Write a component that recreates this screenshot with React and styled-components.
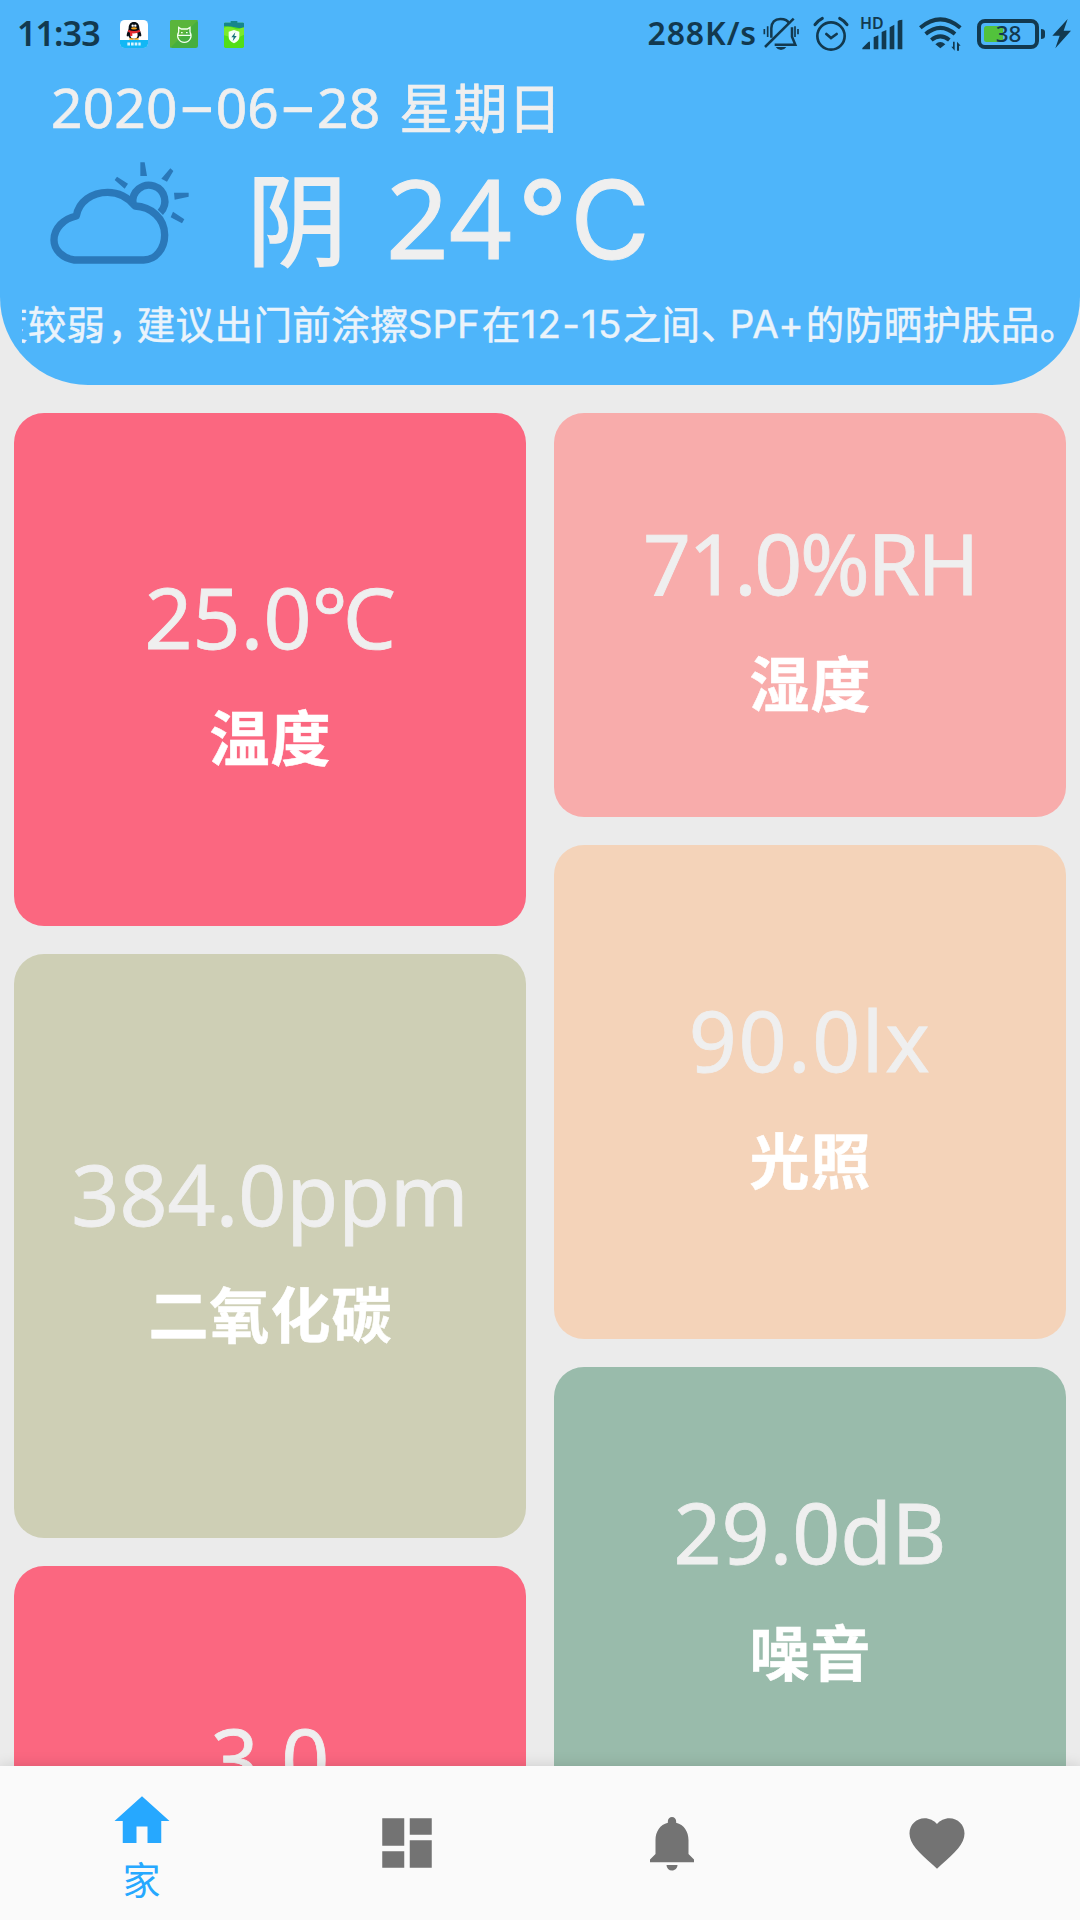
import React from "react";
import styled, { createGlobalStyle } from "styled-components";
import { MdHome, MdDashboard, MdNotifications, MdFavorite } from "react-icons/md";

const INK = "#12394f";

const GlobalStyle = createGlobalStyle`
  * { box-sizing: border-box; }
  body {
    margin: 0;
    overflow: hidden;
    background: #ebebeb;
    font-family: "Noto Sans", "Noto Sans CJK SC", sans-serif;
  }
`;

const Screen = styled.div`
  width: 1080px;
  height: 1920px;
  display: flex;
  flex-direction: column;
  overflow: hidden;
  background: #ebebeb;
`;

const Header = styled.header`
  flex: none;
  height: 385px;
  display: flex;
  flex-direction: column;
  background: #4eb5fa;
  border-radius: 0 0 88px 88px;
  color: #efefef;
  white-space: nowrap;
`;

const StatusBar = styled.div`
  height: 68px;
  display: flex;
  justify-content: space-between;
  padding: 0 8px 0 17px;
  color: ${INK};
`;

const StatusGroup = styled.div`
  display: flex;
  align-items: center;
`;

const Clock = styled.span`
  width: 103px;
  padding-bottom: 2px;
  font-size: 34px;
  line-height: 64px;
  font-weight: 600;
  letter-spacing: -0.9px;
`;

const Speed = styled.span`
  padding-bottom: 2px;
  font-size: 32px;
  line-height: 64px;
  font-weight: 600;
  letter-spacing: 0.9px;
  margin-right: 6px;
`;

const StatusIcon = styled.svg`
  display: block;
  flex: none;
  overflow: visible;
  margin-right: ${(p) => p.$gap || 0}px;
`;

const DateLine = styled.div`
  height: 80px;
  padding-left: 51px;
  font-size: 55px;
  line-height: 78px;
  letter-spacing: 0.2px;
  display: flex;
  -webkit-text-stroke: 0.7px currentColor;
`;

const Dash = styled.span`
  display: inline-block;
  width: 38px;
  text-align: center;
  font-family: Inter, sans-serif;
  transform: scaleX(1.55);
`;

const Weekday = styled.span`
  margin-left: 19px;
  font-size: 54px;
  line-height: 80px;
`;

const WeatherRow = styled.div`
  height: 140px;
  display: flex;
  align-items: center;
  padding: 0 0 10px 50px;
`;

const Condition = styled.span`
  margin-left: 58px;
  padding-top: 11px;
  font-size: 100px;
  line-height: 130px;
  -webkit-text-stroke: 1.8px currentColor;
`;

const Temperature = styled.span`
  margin-left: 39px;
  padding-top: 8px;
  font-size: 110px;
  line-height: 130px;
  -webkit-text-stroke: 1px currentColor;
`;

const Unit = styled.span`
  margin-left: 6px;
  font-family: Inter, sans-serif;
  font-size: 109px;
  letter-spacing: 4px;
  -webkit-text-stroke: 1px currentColor;
`;

const Marquee = styled.div`
  height: 60px;
  margin: 6px 0 0 22px;
  display: flex;
  overflow: hidden;
  color: #eaf3fa;
  font-size: 38.5px;
  line-height: 61px;
  -webkit-text-stroke: 0.5px currentColor;
`;

const Segment = styled.span`
  flex: none;
  width: ${(p) => p.$w}px;
  letter-spacing: ${(p) => p.$ls || 0}px;
  margin-left: ${(p) => p.$ml || 0}px;
`;

const LatinSegment = styled(Segment)`
  font-family: Inter, sans-serif;
  line-height: 61px;
  -webkit-text-stroke: 0.4px currentColor;
`;

const Board = styled.main`
  flex: 1;
  min-height: 0;
  display: grid;
  grid-template-columns: 512px 512px;
  column-gap: 28px;
  padding: 28px 14px 0;
  overflow: hidden;
`;

const Column = styled.div`
  display: flex;
  flex-direction: column;
  gap: 28px;
`;

const Card = styled.section`
  flex: none;
  height: ${(p) => p.$h}px;
  display: flex;
  flex-direction: column;
  align-items: center;
  justify-content: center;
  gap: 32px;
  padding-top: 1px;
  border-radius: 30px;
  background: ${(p) => p.$bg};
`;

const Value = styled.div`
  font-size: 84px;
  line-height: 104px;
  color: #efefef;
  letter-spacing: ${(p) => p.$ls}px;
  white-space: nowrap;
  -webkit-text-stroke: 0.8px currentColor;
`;

const Label = styled.div`
  font-size: 60px;
  line-height: 74px;
  font-weight: 700;
  color: #fff;
  letter-spacing: 1px;
  margin-left: 1px;
  -webkit-text-stroke: 0.5px currentColor;
`;

const Nav = styled.nav`
  position: relative;
  flex: none;
  height: 154px;
  display: grid;
  grid-template-columns: repeat(4, 1fr);
  padding: 0 11px 0 9px;
  background: #fafafa;
  box-shadow: 0 0 14px rgba(0, 0, 0, 0.14);
`;

const NavItem = styled.a`
  display: flex;
  flex-direction: column;
  align-items: center;
  justify-content: center;
  gap: 1px;
  padding-top: ${(p) => (p.$active ? 5 : 0)}px;
  color: ${(p) => (p.$active ? "#26a8ff" : "#737373")};
  font-size: 38px;
  line-height: 48px;
`;

function QQIcon() {
  return (
    <StatusIcon width="28" height="28" viewBox="0 0 84 84" $gap={22}>
      <rect width="84" height="84" rx="14" fill="#fff" />
      <path d="M0 60h84v10q0 14-14 14H14Q0 84 0 70z" fill="#12b7f5" />
      <path d="M22 72h40" stroke="#d9f4ff" strokeWidth="9" strokeDasharray="8 3" />
      <path d="M42 6c11 0 16 8 16 18 0 7 6 14 6 22 0 4-2 4-5 1-2 7-8 11-17 11s-15-4-17-11c-3 3-5 3-5-1 0-8 6-15 6-22C26 14 31 6 42 6z" fill="#080d14" />
      <ellipse cx="42" cy="45" rx="11" ry="11" fill="#fff" />
      <circle cx="38" cy="17" r="3.5" fill="#fff" />
      <circle cx="46" cy="17" r="3.5" fill="#fff" />
      <ellipse cx="42" cy="25" rx="9" ry="3.5" fill="#f9a61a" />
      <path d="M25 29q17 8 34 0l2 6q-12 6-24 5v8h-7v-10l-6-3z" fill="#e32a2f" />
      <path d="M28 57h12M44 57h12" stroke="#f9a61a" strokeWidth="5" />
    </StatusIcon>
  );
}

function MonsterIcon() {
  return (
    <StatusIcon width="28" height="28" viewBox="0 0 84 84" $gap={26}>
      <rect width="84" height="84" rx="7" fill="#46ae3f" />
      <path d="M0 84V7q0-7 7-7h77z" fill="#5ab53b" />
      <path d="M26 36V22l8 5h18l8-5v14c8 15-1 31-17 31S18 51 26 36zM22 46h43" fill="none" stroke="#f2fff0" strokeWidth="4" />
      <path d="M33 38h5M48 38h5" stroke="#f2fff0" strokeWidth="4" />
    </StatusIcon>
  );
}

function SaverIcon() {
  return (
    <StatusIcon width="20" height="27" viewBox="0 0 60 81">
      <path d="M3 5h54q3 0 3 3v68q0 5-5 5H5q-5 0-5-5V8q0-3 3-3z" fill="#52de17" />
      <path d="M0 20q15-6 30 2t30-6v25q-20 14-60 2z" fill="#7bea2a" />
      <path d="M20 0h20v5h17q3 0 3 3v11q-12 5-28 0T0 16V8q0-3 3-3h17z" fill="#17858c" />
      <path d="M30 27l16 5v16q0 12-16 19-16-7-16-19V32z" fill="#f5fff5" />
      <path d="M34 34L22 49h7l-3 12 12-16h-7z" fill="#15727a" />
    </StatusIcon>
  );
}

function MuteIcon() {
  return (
    <StatusIcon width="36" height="34" viewBox="0 0 108 102" $gap={14}>
      <g fill="none" stroke={INK} strokeWidth="7.5">
        <path d="M25 62V34C26 14 38 6 52 6s23 5 27 14M87 31v28l10 24H35" />
        <path d="M6 90L92 5" />
        <path d="M4 36v16M14 28v32M96 28v32M105 36v16" strokeWidth="5" />
      </g>
      <path d="M38 90h32q-6 9-16 9t-16-9z" fill={INK} />
    </StatusIcon>
  );
}

function AlarmIcon() {
  return (
    <StatusIcon width="36" height="36" viewBox="0 0 108 108" $gap={12}>
      <g fill="none" stroke={INK} strokeWidth="8" strokeLinecap="round">
        <circle cx="54" cy="60" r="41" />
        <path d="M6 26Q14 14 28 7M102 26Q94 14 80 7" strokeWidth="9" />
        <path d="M40 54l14 12 17-12" />
      </g>
    </StatusIcon>
  );
}

function SignalIcon() {
  return (
    <StatusIcon width="42" height="33" viewBox="0 0 126 99" $gap={16}>
      <text x="-3" y="34" fill={INK} fontSize="46" fontWeight="600" fontFamily="Noto Sans, sans-serif" textLength="71" lengthAdjust="spacingAndGlyphs">HD</text>
      <path d="M4 94V90L22 72q5-4 5 2v20zM38 58l14-6v42H38zM62 42l14-6v58H62zM86 28l14-8v74H86zM110 10q2-5 14-5v89h-14z" fill={INK} />
    </StatusIcon>
  );
}

function WifiIcon() {
  return (
    <StatusIcon width="43" height="34" viewBox="0 0 129 102" $gap={15}>
      <g fill="none" stroke={INK} strokeWidth="12">
        <path d="M4 32Q64-18 124 32M20 51Q64 14 108 51M37 69Q64 47 91 69" />
      </g>
      <path d="M64 94L49 82q15-14 30 0zM107 74v27l-10-12h5V74zM114 101V74l11 12h-5v15z" fill={INK} />
    </StatusIcon>
  );
}

function BatteryIcon() {
  return (
    <StatusIcon width="68" height="32" viewBox="0 0 68 32" $gap={7}>
      <rect x="2" y="3" width="58" height="26" rx="6" fill="none" stroke={INK} strokeWidth="4" />
      <rect x="7" y="8" width="19" height="16" rx="2.5" fill="#52c23c" />
      <path d="M64 11v10q4 0 4-3v-4q0-3-4-3z" fill={INK} />
      <text x="31.5" y="24" fill={INK} fontSize="22.5" fontWeight="500" textAnchor="middle" fontFamily="Noto Sans, sans-serif">38</text>
    </StatusIcon>
  );
}

function BoltIcon() {
  return (
    <StatusIcon width="20" height="30" viewBox="0 0 60 90">
      <path d="M47 0L1 50h22L10 88l47-53H35z" fill={INK} />
    </StatusIcon>
  );
}

function CloudIcon() {
  return (
    <StatusIcon width="139" height="102" viewBox="149 66 417 306">
      <g fill="none" stroke="#2a78b9" strokeWidth="22" strokeLinejoin="round">
        <path d="M222 360C187 355 161 330 161 300c0-35 29-64 67-72 7-43 47-71 94-71 33 0 60 14 82 41 48 2 89 37 89 87 0 42-28 75-63 75z" />
        <path d="M398 190A48 48 0 1 1 480 217" />
      </g>
      <path d="M420 67h13l7 41h-20zM510 85l9 8-19 32-17-9zM565 158v12l-42 9-2-21zM518 215l34 23-7 12-34-18zM350 110l33 21-10 15-30-26z" fill="#2a78b9" />
    </StatusIcon>
  );
}

const LEFT = [
  { value: "25.0℃", label: "温度", h: 513, bg: "#fb6780", ls: 0.2 },
  { value: "384.0ppm", label: "二氧化碳", h: 584, bg: "#cecfb5", ls: 0.1 },
  { value: "3.0", label: "", h: 489, bg: "#fb6780", ls: 0 },
];

const RIGHT = [
  { value: "71.0%RH", label: "湿度", h: 404, bg: "#f8acab", ls: -2.4 },
  { value: "90.0lx", label: "光照", h: 494, bg: "#f4d3b9", ls: 1.6 },
  { value: "29.0dB", label: "噪音", h: 434, bg: "#99bbab", ls: 0 },
];

function Cards({ items }) {
  return (
    <Column>
      {items.map((c) => (
        <Card key={c.value} $h={c.h} $bg={c.bg}>
          <Value $ls={c.ls}>{c.value}</Value>
          <Label>{c.label || "\u00a0"}</Label>
        </Card>
      ))}
    </Column>
  );
}

export default function App() {
  return (
    <Screen>
      <GlobalStyle />
      <Header>
        <StatusBar>
          <StatusGroup>
            <Clock>11:33</Clock>
            <QQIcon />
            <MonsterIcon />
            <SaverIcon />
          </StatusGroup>
          <StatusGroup>
            <Speed>288K/s</Speed>
            <MuteIcon />
            <AlarmIcon />
            <SignalIcon />
            <WifiIcon />
            <BatteryIcon />
            <BoltIcon />
          </StatusGroup>
        </StatusBar>
        <DateLine>
          2020<Dash>-</Dash>06<Dash>-</Dash>28<Weekday>星期日</Weekday>
        </DateLine>
        <WeatherRow>
          <CloudIcon />
          <Condition>阴</Condition>
          <Temperature>
            24<Unit>°C</Unit>
          </Temperature>
        </WeatherRow>
        <Marquee>
          <Segment $w={38.7} $ml={-33}>度</Segment>
          <Segment $w={80} $ls={0.4}>较弱</Segment>
          <Segment $w={29}>，</Segment>
          <Segment $w={271} $ls={0.4}>建议出门前涂擦</Segment>
          <LatinSegment $w={74}>SPF</LatinSegment>
          <Segment $w={39}>在</Segment>
          <LatinSegment $w={102} $ls={1.2}>12-15</LatinSegment>
          <Segment $w={78} $ls={0.4}>之间</Segment>
          <Segment $w={29}>、</Segment>
          <LatinSegment $w={76} $ls={0.8}>PA+</LatinSegment>
          <Segment $w={234} $ls={0.5}>的防晒护肤品</Segment>
          <Segment $w={38}>。</Segment>
        </Marquee>
      </Header>
      <Board>
        <Cards items={LEFT} />
        <Cards items={RIGHT} />
      </Board>
      <Nav>
        <NavItem $active>
          <MdHome size={66} />
          家
        </NavItem>
        <NavItem>
          <MdDashboard size={66} />
        </NavItem>
        <NavItem>
          <MdNotifications size={66} />
        </NavItem>
        <NavItem>
          <MdFavorite size={66} />
        </NavItem>
      </Nav>
    </Screen>
  );
}
